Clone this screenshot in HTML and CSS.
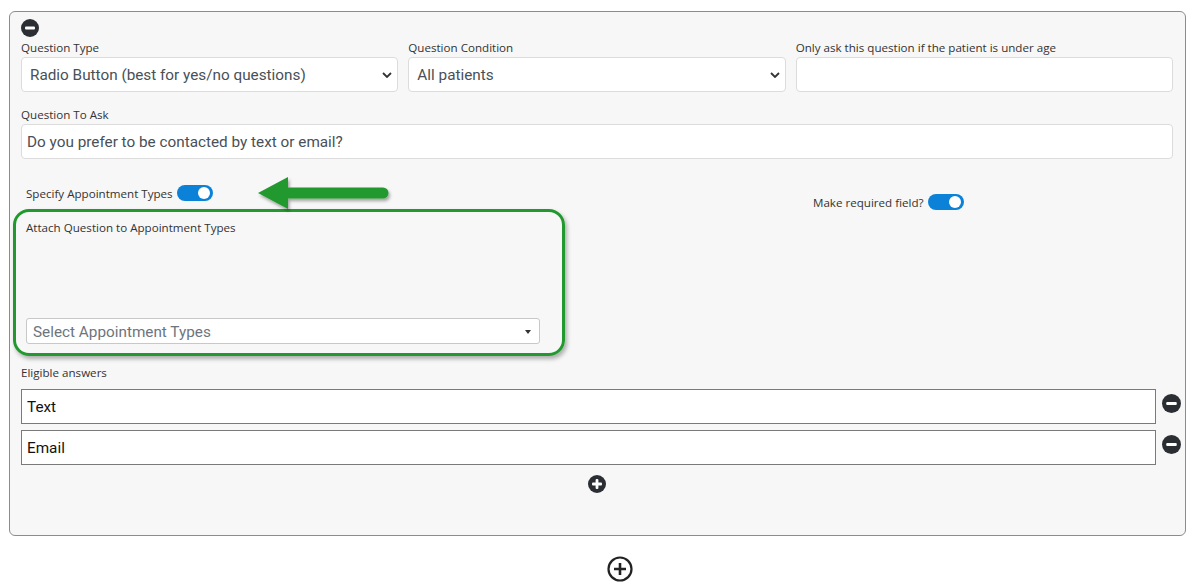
FILE: index.html
```html
<!DOCTYPE html>
<html lang="en">
<head>
    <meta charset="UTF-8">
    <meta name="viewport" content="width=device-width, initial-scale=1.0">
    <title>Question Editor</title>
    <link rel="stylesheet" href="styles.css">
</head>
<body>
    <div class="card">
        <!-- remove question -->
        <svg class="icon" width="18" height="18" viewBox="0 0 18 18"><circle cx="9" cy="9" r="9" fill="#2b2f33"/><rect x="4" y="7.6" width="10" height="2.8" rx="1" fill="#fff"/></svg>

        <div class="row-3">
            <div class="field">
                <label>Question Type</label>
                <div class="select">
                    <span>Radio Button (best for yes/no questions)</span>
                    <svg width="10" height="6" viewBox="0 0 10 6"><path d="M1 1l4 4 4-4" fill="none" stroke="#333" stroke-width="1.8"/></svg>
                </div>
            </div>
            <div class="field">
                <label>Question Condition</label>
                <div class="select">
                    <span>All patients</span>
                    <svg width="10" height="6" viewBox="0 0 10 6"><path d="M1 1l4 4 4-4" fill="none" stroke="#333" stroke-width="1.8"/></svg>
                </div>
            </div>
            <div class="field">
                <label>Only ask this question if the patient is under age</label>
                <div class="select"></div>
            </div>
        </div>

        <div class="field field-full">
            <label>Question To Ask</label>
            <div class="text-input">Do you prefer to be contacted by text or email?</div>
        </div>

        <div class="appt-row">
            <div class="appt-col">
                <div class="switch-line">
                    <span>Specify Appointment Types</span>
                    <span class="toggle"></span>
                </div>
                <div class="highlight">
                    <label>Attach Question to Appointment Types</label>
                    <div class="multi-select">
                        <span>Select Appointment Types</span>
                        <svg width="6" height="4" viewBox="0 0 6 4"><path d="M0 0h6L3 4z" fill="#333"/></svg>
                    </div>
                </div>
            </div>
            <div class="required-col">
                <div class="switch-line">
                    <span>Make required field?</span>
                    <span class="toggle"></span>
                </div>
            </div>
        </div>

        <!-- annotation arrow -->
        <svg class="arrow" width="140" height="44" viewBox="0 0 140 44">
            <g filter="url(#sh)">
                <path d="M3 21 L33 5 L33 37 Z" fill="#22992f"/>
                <line x1="30" y1="21" x2="128" y2="21" stroke="#22992f" stroke-width="11" stroke-linecap="round"/>
            </g>
            <defs><filter id="sh" x="-10%" y="-20%" width="130%" height="160%"><feDropShadow dx="1.5" dy="2.5" stdDeviation="1.5" flood-color="#000" flood-opacity="0.35"/></filter></defs>
        </svg>

        <label class="answers-label">Eligible answers</label>
        <div class="answer">
            <div class="answer-input">Text</div>
            <svg class="icon" width="19" height="19" viewBox="0 0 18 18"><circle cx="9" cy="9" r="9" fill="#2b2f33"/><rect x="4" y="7.6" width="10" height="2.8" rx="1" fill="#fff"/></svg>
        </div>
        <div class="answer">
            <div class="answer-input">Email</div>
            <svg class="icon" width="19" height="19" viewBox="0 0 18 18"><circle cx="9" cy="9" r="9" fill="#2b2f33"/><rect x="4" y="7.6" width="10" height="2.8" rx="1" fill="#fff"/></svg>
        </div>

        <div class="add-answer">
            <svg class="icon" width="18" height="18" viewBox="0 0 18 18"><circle cx="9" cy="9" r="9" fill="#2b2f33"/><rect x="4" y="7.6" width="10" height="2.8" rx="1" fill="#fff"/><rect x="7.6" y="4" width="2.8" height="10" rx="1" fill="#fff"/></svg>
        </div>
    </div>

    <div class="add-question">
        <svg width="26" height="26" viewBox="0 0 26 26"><circle cx="13" cy="13" r="11.5" fill="none" stroke="#222" stroke-width="2.2"/><path d="M13 7v12M7 13h12" stroke="#222" stroke-width="2.6"/></svg>
    </div>
</body>
</html>
```

FILE: styles.css
```css
body {
    margin: 0;
    font-family: "Open Sans", "Noto Sans", sans-serif;
    background-color: #fff;
    color: #333;
}
.card {
    position: relative;
    margin: 11px 6px 0 9px;
    padding: 7px 12px 42px 11px;
    background-color: #f7f7f7;
    border: 1px solid #8c8c8c;
    border-radius: 6px;
}
.icon {
    display: block;
}
label {
    display: block;
    font-size: 11.6px;
    line-height: 16px;
    color: #333;
}
.row-3 {
    display: grid;
    grid-template-columns: 1fr 1fr 1fr;
    gap: 10px;
    margin-top: 3px;
}
.field label {
    margin-bottom: 1px;
}
.select,
.text-input {
    box-sizing: border-box;
    height: 35px;
    display: flex;
    align-items: center;
    justify-content: space-between;
    padding: 0 5px 0 8px;
    background-color: #fff;
    border: 1px solid #dcdcdc;
    border-radius: 4px;
    font-family: Roboto, sans-serif;
    font-size: 15.3px;
    color: #495057;
}
.field-full {
    margin-top: 15px;
}
.text-input {
    padding-left: 5px;
}
.appt-row {
    display: flex;
    margin-top: 26px;
}
.appt-col {
    width: 552px;
    margin-left: -8px;
}
.switch-line {
    display: flex;
    align-items: center;
    height: 16px;
    font-size: 11.6px;
    color: #333;
}
.appt-col .switch-line {
    padding-left: 13px;
}
.toggle {
    position: relative;
    width: 36px;
    height: 16px;
    margin-left: 4px;
    border-radius: 8px;
    background-color: #0b82d8;
}
.toggle::after {
    content: "";
    position: absolute;
    right: 3px;
    top: 2px;
    width: 12px;
    height: 12px;
    border-radius: 50%;
    background-color: #fff;
}
.required-col {
    margin-left: 248px;
    padding-top: 9px;
}
.highlight {
    height: 147px;
    box-sizing: border-box;
    margin-top: 8px;
    padding: 8px 22px 9px 10px;
    border: 3px solid #22992f;
    border-radius: 16px;
    box-shadow: 2px 3px 4px rgba(0, 0, 0, 0.3);
    display: flex;
    flex-direction: column;
    justify-content: space-between;
}
.multi-select {
    box-sizing: border-box;
    height: 26px;
    display: flex;
    align-items: center;
    justify-content: space-between;
    padding: 2px 8px 0 6px;
    background-color: #fff;
    border: 1px solid #c8c8c8;
    border-radius: 3px;
    font-family: Roboto, sans-serif;
    font-size: 15.3px;
    color: #6c757d;
}
.arrow {
    position: absolute;
    left: 245px;
    top: 160px;
}
.answers-label {
    margin-top: 9px;
    margin-bottom: 8px;
}
.answer {
    display: flex;
    align-items: center;
    gap: 6px;
    margin-right: -8px;
    margin-bottom: 6px;
}
.answer .icon {
    margin-bottom: 6px;
}
.answer-input {
    flex: 1;
    box-sizing: border-box;
    height: 35px;
    display: flex;
    align-items: center;
    padding-left: 5px;
    background-color: #fff;
    border: 1px solid #7a7a7a;
    font-family: Roboto, sans-serif;
    font-size: 15.3px;
    color: #111;
}
.add-answer {
    display: flex;
    justify-content: center;
    margin-top: 10px;
}
.add-question {
    display: flex;
    justify-content: center;
    margin: 20px 0 0 48px;
}
```
